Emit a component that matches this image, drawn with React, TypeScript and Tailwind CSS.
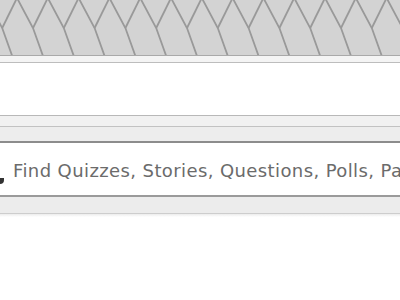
const PERIOD = 30.8;

// trellis pattern across the header band
function Trellis() {
  const items = [];
  for (let k = -2; k < 15; k++) {
    const p = 17 + k * PERIOD;
    items.push(
      <path
        key={"a" + k}
        d={`M${p} -2 L${p + 16} 28 L${p + 26} 56`}
        fill="none"
        stroke="#999999"
        strokeWidth="1.8"
      />
    );
    items.push(
      <path
        key={"b" + k}
        d={`M${p + PERIOD} -2 L${p + 16} 28`}
        fill="none"
        stroke="#999999"
        strokeWidth="1.8"
      />
    );
  }
  return (
    <svg width="400" height="55" className="block">
      {items}
    </svg>
  );
}

export default function App() {
  return (
    <div className="w-[400px] h-[300px] overflow-hidden bg-white">
      <div className="h-[55px] bg-[#d3d3d3]">
        <Trellis />
      </div>
      <div className="h-px bg-[#a9a9a9]" />
      <div className="h-[6px] bg-[#f4f4f4]" />
      <div className="h-px bg-[#bdbdbd]" />
      <div className="h-[52px] bg-white" />
      <div className="h-px bg-[#b8b8b8]" />
      <div className="h-[10px] bg-[#f1f1f1]" />
      <div className="h-px bg-[#c2c2c2]" />
      <div className="h-[14px] bg-[#ededed]" />

      {/* search box */}
      <div className="relative h-[56px] border-t-2 border-b-2 border-t-[#8c8c8c] border-b-[#9a9a9a] bg-white flex items-center">
        <div className="absolute left-0 top-[35px] w-[4px] h-[6px] bg-[#333] rounded-br-sm" />
        <span className="pl-[13px] pt-[2px] whitespace-nowrap text-[18px] text-[#6b6b6b] font-['DejaVu_Sans',sans-serif] tracking-[0.4px]">
          Find Quizzes, Stories, Questions, Polls, Pages
        </span>
      </div>

      <div className="h-[16px] bg-[#ececec]" />
      <div className="h-px bg-[#cdcdcd]" />
      <div className="h-[3px] bg-gradient-to-b from-[#ececec] to-white" />
    </div>
  );
}
